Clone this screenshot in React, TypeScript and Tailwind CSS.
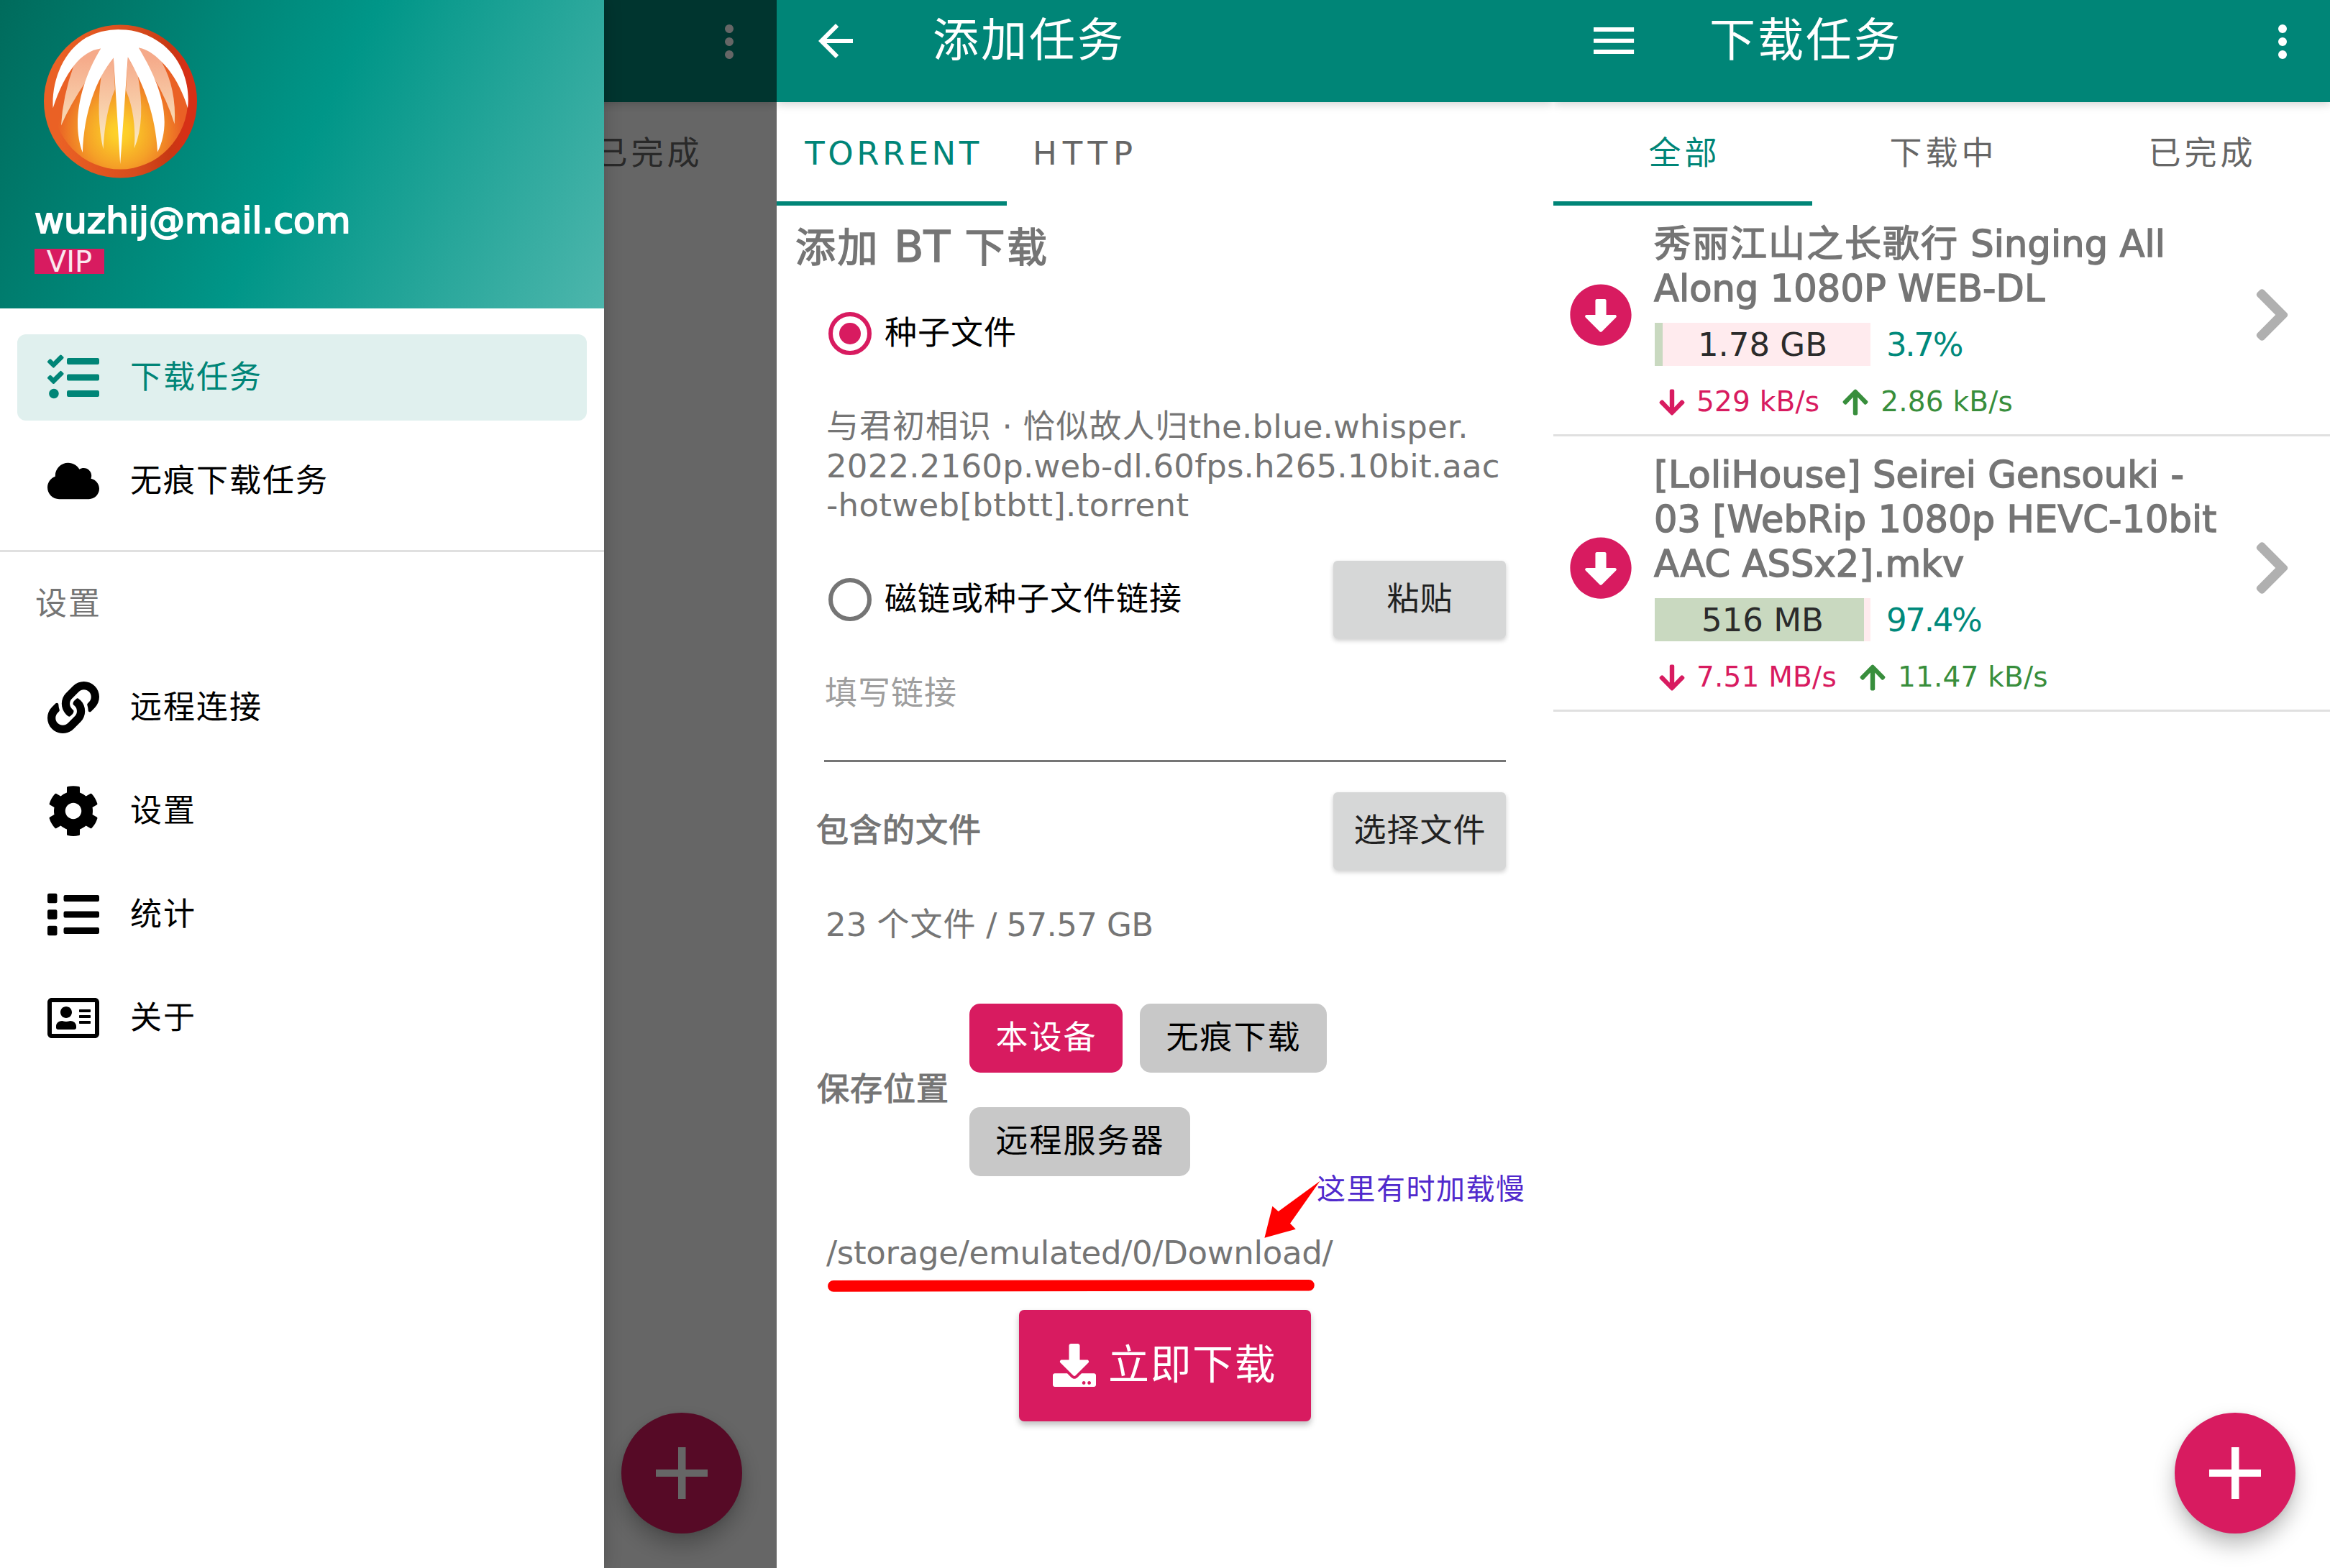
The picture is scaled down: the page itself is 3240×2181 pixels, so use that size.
import type { ReactNode } from "react";
import {
  FaArrowAltCircleDown,
  FaArrowDown,
  FaArrowUp,
  FaChevronRight,
  FaCloud,
  FaCog,
  FaDownload,
  FaLink,
  FaList,
  FaRegAddressCard,
  FaTasks,
} from "react-icons/fa";

function BackIcon() {
  return (
    <svg viewBox="0 0 24 24" className="-ml-px mr-px h-[72px] w-[72px]" fill="currentColor">
      <path d="M20 11H7.83l5.59-5.59L12 4l-8 8 8 8 1.41-1.41L7.83 13H20v-2z" />
    </svg>
  );
}

function MenuIcon() {
  return (
    <svg viewBox="0 0 24 24" className="h-[72px] w-[72px]" fill="currentColor">
      <path d="M3 18h18.700v-2H3v2zm0-5.100h18.700v-2H3v2zm0-7.200v2h18.700v-2H3z" />
    </svg>
  );
}

function MoreIcon() {
  return (
    <svg viewBox="0 0 24 24" className="mt-[2px] h-[72px] w-[72px]" fill="currentColor">
      <circle cx="12" cy="6" r="2" />
      <circle cx="12" cy="12" r="2" />
      <circle cx="12" cy="18" r="2" />
    </svg>
  );
}

function AppBar({ icon, title, more }: { icon: ReactNode; title: string; more?: boolean }) {
  return (
    <header className="relative z-10 h-[142px] bg-[#008577] pt-[21px] text-white shadow-[0_3px_12px_rgba(0,0,0,0.18)]">
      <div className="flex h-[72px] items-center pl-[47px] pr-[30px]">
        {icon}
        <h1 className="-mt-[2px] ml-[98px] flex-1 text-[64px] leading-none tracking-[3px]">{title}</h1>
        {more && <MoreIcon />}
      </div>
    </header>
  );
}

function ListTabs() {
  return (
    <nav className="grid h-[144px] grid-cols-3 text-[45px] tracking-[5px] text-[#666]">
      <div className="flex items-center justify-center border-b-[6px] border-[#008577] pl-[5px] pt-[6px] text-[#008577]">全部</div>
      <div className="flex items-center justify-center pl-[5px]">下载中</div>
      <div className="flex items-center justify-center pl-[5px]">已完成</div>
    </nav>
  );
}

function Fab() {
  return (
    <button className="absolute bottom-[48px] right-[48px] flex h-[168px] w-[168px] items-center justify-center rounded-full bg-[#d81b60] shadow-[0_16px_30px_rgba(0,0,0,0.26),0_2px_8px_rgba(0,0,0,0.08)]">
      <svg viewBox="0 0 72 72" className="h-[72px] w-[72px]" fill="#fff">
        <path d="M31 0h10.500v31H72v10H41.500v31H31V41H0V31h31z" />
      </svg>
    </button>
  );
}

function Logo() {
  return (
    <svg viewBox="183 101 640 642" className="h-[214px] w-[213px]">
      <defs>
        <linearGradient id="rim" x1="0" x2="1" y1="0" y2="0">
          <stop offset="0.1" stopColor="#ea6125" />
          <stop offset="0.35" stopColor="#e15620" />
          <stop offset="0.6" stopColor="#d74c1d" />
          <stop offset="0.82" stopColor="#c73813" />
          <stop offset="0.92" stopColor="#d63016" />
        </linearGradient>
        <radialGradient id="glow" gradientUnits="userSpaceOnUse" cx="500" cy="550" r="260">
          <stop offset="0" stopColor="#ffd429" />
          <stop offset="0.15" stopColor="#fccc29" />
          <stop offset="0.55" stopColor="#f5a127" />
          <stop offset="1" stopColor="#ea6125" />
        </radialGradient>
        <linearGradient id="petal" gradientUnits="userSpaceOnUse" x1="500" x2="500" y1="240" y2="620">
          <stop offset="0" stopColor="#f5aa8a" />
          <stop offset="1" stopColor="#faedc4" />
        </linearGradient>
      </defs>
      <circle cx="503" cy="422" r="320" fill="url(#rim)" />
      <ellipse cx="502" cy="414" rx="283" ry="292" fill="url(#glow)" />
      <g fill="url(#petal)">
        <path d="M421 201Q370 200 308 272Q262 400 255 523Q290 440 360 336L440 230z" />
        <path d="M579 198Q640 205 675 257Q738 370 729 517Q700 420 640 318L565 230z" />
        <path d="M474 240Q440 270 422 320Q400 480 431 622Q438 470 480 372z" />
        <path d="M534 238L575 310Q610 500 561 618Q570 480 526 376z" />
      </g>
      <path
        fill="#fff"
        d="M221 450C215 340 260 215 360 155Q430 120 502 122Q600 122 680 185C760 250 795 350 784 450C760 370 720 300 675 257C640 220 610 203 579 198C640 300 735 480 658 634C650 480 600 350 534 237L502 684L474 240C400 330 350 470 345 636C300 520 330 350 421 201C340 210 270 300 221 450z"
      />
    </svg>
  );
}

function NavItem({ icon, label, active }: { icon: ReactNode; label: string; active?: boolean }) {
  return (
    <div
      className={
        active
          ? "mx-[24px] flex h-[120px] items-center rounded-[12px] bg-[#e0f0ee] pl-[42px] text-[#008577]"
          : "mx-[24px] flex h-[120px] items-center pl-[42px] text-black"
      }
    >
      <span className="flex w-[72px] justify-center">{icon}</span>
      <span className="-mt-px ml-[43px] text-[44px] leading-none tracking-[2px]">{label}</span>
    </div>
  );
}

function DrawerScreen() {
  return (
    <section className="relative h-[2181px] w-[1080px] overflow-hidden bg-white">
      <AppBar icon={<MenuIcon />} title="下载任务" more />
      <ListTabs />
      <Fab />
      <div className="absolute inset-0 z-20 bg-black/60" />
      <aside className="absolute inset-y-0 left-0 z-30 w-[840px] bg-white shadow-[0_0_24px_rgba(0,0,0,0.2)]">
        <div className="flex h-[429px] flex-col items-start bg-[linear-gradient(117deg,#006b5c,#009688_50%,#4db6ac)] pt-[34px] text-white">
          <div className="ml-[61px]">
            <Logo />
          </div>
          <p className="ml-[48px] mt-[29px] text-[50px] leading-[60px] tracking-[0.100px] [-webkit-text-stroke:2px_currentColor]">
            wuzhij@mail.com
          </p>
          <span className="ml-[48px] mt-[9px] flex h-[35px] w-[97px] items-center justify-center bg-[#d81b60] text-[40px] leading-none text-white/90">
            VIP
          </span>
        </div>
        <div className="flex flex-col gap-[24px] pb-[36px] pt-[36px]">
          <NavItem active icon={<FaTasks className="h-[72px] w-[72px]" />} label="下载任务" />
          <NavItem icon={<FaCloud className="h-[72px] w-[72px]" />} label="无痕下载任务" />
        </div>
        <div className="border-t-[3px] border-[#e0e0e0] pl-[49px] text-[44px] leading-[144px] tracking-[2px] text-[#757575]">设置</div>
        <div className="mt-[12px] flex flex-col gap-[24px]">
          <NavItem icon={<FaLink className="h-[72px] w-[72px]" />} label="远程连接" />
          <NavItem icon={<FaCog className="h-[74px] w-[74px]" />} label="设置" />
          <NavItem icon={<FaList className="h-[72px] w-[72px]" />} label="统计" />
          <NavItem icon={<FaRegAddressCard className="h-[72px] w-[72px]" />} label="关于" />
        </div>
      </aside>
    </section>
  );
}

function Radio({ checked, label }: { checked?: boolean; label: string }) {
  return (
    <label className="flex flex-1 items-center pl-[72px] text-[45px] leading-none tracking-[1px] text-black">
      <span
        className={
          checked
            ? "mr-[18px] flex h-[60px] w-[60px] items-center justify-center rounded-full border-[6px] border-[#d81b60]"
            : "mr-[18px] flex h-[60px] w-[60px] rounded-full border-[6px] border-[#757575]"
        }
      >
        {checked && <span className="h-[30px] w-[30px] rounded-full bg-[#d81b60]" />}
      </span>
      <span className="-mt-px">{label}</span>
    </label>
  );
}

function GreyButton({ children }: { children: ReactNode }) {
  return (
    <button className="mb-px mr-[66px] flex h-[108px] w-[240px] items-center justify-center rounded-[6px] bg-[#d6d7d7] pl-px text-[45px] leading-none tracking-[1px] text-[#212121] shadow-[0_3px_6px_rgba(0,0,0,0.2)]">
      <span className="-mt-px">{children}</span>
    </button>
  );
}

function AddTaskScreen() {
  return (
    <section className="relative h-[2181px] w-[1080px] overflow-hidden bg-white text-[45px] text-[#757575]">
      <AppBar icon={<BackIcon />} title="添加任务" />
      <nav className="flex h-[144px] text-[45px]">
        <div className="flex w-[320px] items-center justify-center border-b-[6px] border-[#008577] pl-[5px] pt-[6px] tracking-[4.500px] text-[#008577]">
          TORRENT
        </div>
        <div className="flex items-center pl-[36px] tracking-[8px] text-[#666]">HTTP</div>
      </nav>
      <h2 className="h-[117px] pl-[26px] text-[56px] leading-[115px] tracking-[2.500px] [-webkit-text-stroke:1.500px_currentColor]">
        添加 <span className="text-[60px] tracking-normal">BT</span> 下载
      </h2>
      <div className="flex h-[122px] items-center">
        <Radio checked label="种子文件" />
      </div>
      <p className="mt-[42px] whitespace-nowrap pl-[69px] leading-[54.500px] tracking-[0.200px]">
        <span className="tracking-[1px]">与君初相识</span>
        {" · "}
        <span className="tracking-[1px]">恰似故人归</span>
        the.blue.whisper.
        <br />
        2022.2160p.web-dl.60fps.h265.10bit.aac
        <br />
        <span className="tracking-[0.350px]">-hotweb[btbtt].torrent</span>
      </p>
      <div className="mt-[49px] flex items-center">
        <Radio label="磁链或种子文件链接" />
        <GreyButton>粘贴</GreyButton>
      </div>
      <div className="mx-[66px] h-[171px] border-b-[3px] border-[#757575] pl-[1px] pt-[49px] leading-[54px] tracking-[1px] text-[#9e9e9e]">
        填写链接
      </div>
      <div className="mt-[42px] flex items-center">
        <h3 className="-mt-[2px] flex-1 pl-[55px] leading-none tracking-[1px] [-webkit-text-stroke:1.200px_currentColor]">包含的文件</h3>
        <GreyButton>选择文件</GreyButton>
      </div>
      <p className="mt-[49px] pl-[68px] leading-[54px]">
        23 <span className="tracking-[1px]">个文件</span>
        <span className="tracking-[-0.600px]"> / 57.57 GB</span>
      </p>
      <div className="mt-[82px] flex items-center">
        <h3 className="-mt-px ml-[56px] w-[212px] leading-none tracking-[1px] [-webkit-text-stroke:1.200px_currentColor]">保存位置</h3>
        <div className="flex w-[560px] flex-wrap gap-x-[24px] gap-y-[48px] leading-none tracking-[2px] text-black">
          <span className="flex h-[96px] w-[213px] items-center justify-center rounded-[15px] bg-[#d81b60] pl-px text-white">本设备</span>
          <span className="flex h-[96px] w-[260px] items-center justify-center rounded-[15px] bg-[#c8c8c8] pl-px">无痕下载</span>
          <span className="flex h-[96px] w-[307px] items-center justify-center rounded-[15px] bg-[#c8c8c8] pl-px">远程服务器</span>
        </div>
      </div>
      <div className="relative mt-[80px] h-[54px] pl-[69px] leading-[54px] tracking-[-0.300px]">
        /storage/emulated/0/Download/
        <svg viewBox="0 0 700 180" className="absolute left-[60px] top-[-84px] h-[180px] w-[700px]" fill="#f00">
          <path d="M695.500 10.700L654 69.700L661.800 77.700L618.400 89.700L629.400 45.700L637.700 53z" />
          <path d="M19 149L680 148a7.500 7.500 0 0 1 0 15.500L19 164.800a7.500 7.500 0 0 1 0-15.800z" />
        </svg>
        <span className="absolute left-[751px] top-[-89px] text-[40px] leading-[54px] tracking-[1.500px] text-[#5029cc]">这里有时加载慢</span>
      </div>
      <button className="mx-auto mt-[52px] flex h-[155px] w-[406px] items-center rounded-[7px] bg-[#d81b60] pl-[47px] text-[57px] leading-none tracking-[1.500px] text-white shadow-[0_5px_9px_rgba(0,0,0,0.25)]">
        <FaDownload className="mr-[17px] h-[60px] w-[60px]" />
        <span className="-mt-[2px]">立即下载</span>
      </button>
    </section>
  );
}

interface Task {
  title: string[];
  size: string;
  percent: number;
  down: string;
  up: string;
}

const tasks: Task[] = [
  {
    title: ["秀丽江山之长歌行 Singing All", "Along 1080P WEB-DL"],
    size: "1.78 GB",
    percent: 3.7,
    down: "529 kB/s",
    up: "2.86 kB/s",
  },
  {
    title: ["[LoliHouse] Seirei Gensouki -", "03 [WebRip 1080p HEVC-10bit", "AAC ASSx2].mkv"],
    size: "516 MB",
    percent: 97.4,
    down: "7.51 MB/s",
    up: "11.47 kB/s",
  },
];

function Title({ line }: { line: string }) {
  const cjk = line.match(/^[\u4e00-\u9fff]+/)?.[0] ?? "";
  return (
    <div>
      {cjk && <span className="tracking-[2px]">{cjk}</span>}
      {line.slice(cjk.length)}
    </div>
  );
}

function TaskRow({ task }: { task: Task }) {
  return (
    <div className="flex border-b-[3px] border-[#e0e0e0]">
      <div className="flex w-[140px] items-center pb-[15px] pl-[22px]">
        <FaArrowAltCircleDown className="h-[88px] w-[88px] text-[#d81b60]" />
      </div>
      <div className="flex-1 pb-[21px] pt-[23px]">
        <div className="whitespace-nowrap text-[51px] leading-[62px] tracking-[0.100px] text-[#757575] [-webkit-text-stroke:1.500px_currentColor]">
          {task.title.map((line) => (
            <Title key={line} line={line} />
          ))}
        </div>
        <div className="ml-px mt-[16px] flex h-[60px] items-center text-[45px] leading-none">
          <div className="relative flex h-[60px] w-[300px] items-center justify-center bg-[#ffebee] text-[#2b2b2b]">
            <div className="absolute inset-y-0 left-0 bg-[#c9d9c0]" style={{ width: `${Math.min(97, Math.max(3, task.percent))}%` }} />
            <span className="relative">{task.size}</span>
          </div>
          <span className="ml-[22px] tracking-[-2.300px] text-[#00897b]">{task.percent}%</span>
        </div>
        <div className="mt-[26px] flex h-[48px] items-center pl-[7px] text-[39px] leading-none">
          <FaArrowDown className="mr-[16px] h-[41px] w-[36px] text-[#d81b60]" />
          <span className="-mt-[2px] tracking-[0.200px] text-[#d81b60]">{task.down}</span>
          <FaArrowUp className="ml-[32px] mr-[17px] h-[41px] w-[36px] text-[#388e3c]" />
          <span className="-mt-[2px] tracking-[0.200px] text-[#388e3c]">{task.up}</span>
        </div>
      </div>
      <div className="flex items-center pb-[15px] pr-[54px]">
        <FaChevronRight className="h-[84px] w-[53px] text-[#b0b0b0]" />
      </div>
    </div>
  );
}

function ListScreen() {
  return (
    <section className="relative h-[2181px] w-[1080px] overflow-hidden bg-white">
      <AppBar icon={<MenuIcon />} title="下载任务" more />
      <ListTabs />
      {tasks.map((task) => (
        <TaskRow key={task.size} task={task} />
      ))}
      <Fab />
    </section>
  );
}

export default function App() {
  return (
    <main className="flex h-[2181px] w-[3240px] overflow-hidden bg-white font-['DejaVu_Sans','Noto_Sans_CJK_SC',sans-serif]">
      <DrawerScreen />
      <AddTaskScreen />
      <ListScreen />
    </main>
  );
}
